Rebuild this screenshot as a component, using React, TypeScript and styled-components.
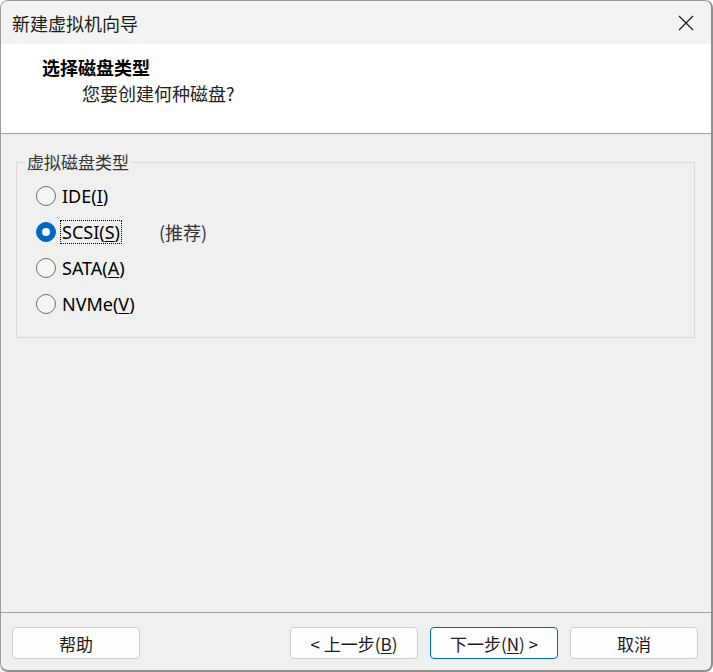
import React from "react";
import styled, { createGlobalStyle } from "styled-components";

const Global = createGlobalStyle`
  html, body { margin: 0; padding: 0; background: #ffffff; }
  * { box-sizing: border-box; }
`;

const FONT = `"Noto Sans", "Noto Sans CJK SC", sans-serif`;
const CJK = `"Noto Sans CJK SC", "Noto Sans", sans-serif`;

const Window = styled.div`
  width: 713px;
  height: 672px;
  display: flex;
  flex-direction: column;
  background: #f0f0f0;
  border: 1px solid #9c9c9c;
  border-right: 2px solid #8f8f8f;
  border-bottom: 2px solid #8f8f8f;
  border-radius: 8px;
  overflow: hidden;
  font-family: ${FONT};
  color: #000;
`;

const TitleBar = styled.div`
  height: 43px;
  flex: none;
  display: flex;
  align-items: center;
  justify-content: space-between;
  background: #f3f3f3;
  padding: 0 17px 0 11px;
`;

const TitleText = styled.span`
  font-family: ${CJK};
  font-size: 18px;
  color: #1a1a1a;
`;

const CloseButton = styled.div`
  width: 16px;
  height: 16px;
  display: flex;
`;

const Header = styled.div`
  height: 90px;
  flex: none;
  background: #ffffff;
  border-bottom: 1px solid #a0a0a0;
  padding: 12px 0 0 41px;
  display: flex;
  flex-direction: column;
  gap: 4px;
`;

const HeaderTitle = styled.div`
  font-family: ${CJK};
  font-size: 18px;
  font-weight: 700;
  line-height: 22px;
  color: #000;
`;

const HeaderSub = styled.div`
  font-family: ${CJK};
  font-size: 18px;
  line-height: 22px;
  padding-left: 40px;
  color: #222;
`;

const Body = styled.div`
  flex: 1;
  padding: 18px 16px 0 15px;
`;

const Group = styled.fieldset`
  margin: 0;
  padding: 6px 0 15px 0;
  border: 1px solid #dadada;
  display: flex;
  flex-direction: column;
`;

const Legend = styled.legend`
  margin-left: 8px;
  padding: 0 2px;
  font-family: ${CJK};
  font-size: 17px;
  line-height: 20px;
  color: #333;
`;

const Row = styled.label`
  height: 36px;
  margin-left: 19px;
  display: flex;
  align-items: center;
`;

const Circle = styled.span<{ $checked?: boolean }>`
  width: 20px;
  height: 20px;
  border-radius: 50%;
  flex: none;
  display: flex;
  align-items: center;
  justify-content: center;
  background: ${(p) => (p.$checked ? "#0067c0" : "#f5f5f5")};
  border: 1px solid ${(p) => (p.$checked ? "#0067c0" : "#6e6e6e")};
  &::after {
    content: "";
    display: ${(p) => (p.$checked ? "block" : "none")};
    width: 8px;
    height: 8px;
    border-radius: 50%;
    background: #ffffff;
  }
`;

const RadioLabel = styled.span<{ $focused?: boolean }>`
  margin-left: 5px;
  padding: 0 1px;
  font-size: 18px;
  line-height: 22px;
  color: #000;
  outline: ${(p) => (p.$focused ? "1px dotted #000" : "none")};
  outline-offset: 0;
  u { text-underline-offset: 2px; }
`;

const Note = styled.span`
  margin-left: 38px;
  font-family: ${CJK};
  font-size: 18px;
  color: #333;
`;

const Footer = styled.div`
  flex: none;
  border-top: 1px solid #a0a0a0;
  padding: 14px 13px 11px 11px;
  display: flex;
  align-items: center;
`;

const Spacer = styled.div`
  flex: 1;
`;

const ButtonGroup = styled.div`
  display: flex;
  gap: 12px;
`;

const Button = styled.button<{ $primary?: boolean }>`
  width: 128px;
  height: 32px;
  border-radius: 4px;
  background: #fdfdfd;
  border: 1px solid ${(p) => (p.$primary ? "#0067c0" : "#d0d0d0")};
  font-family: ${CJK};
  font-size: 17px;
  color: #1a1a1a;
  padding: 0;
  display: flex;
  align-items: center;
  justify-content: center;
  u { text-underline-offset: 2px; }
`;

const options = [
  { key: "ide", pre: "IDE(", acc: "I", post: ")" },
  { key: "scsi", pre: "SCSI(", acc: "S", post: ")", checked: true, note: "(推荐)" },
  { key: "sata", pre: "SATA(", acc: "A", post: ")" },
  { key: "nvme", pre: "NVMe(", acc: "V", post: ")" },
];

export default function App() {
  return (
    <>
      <Global />
      <Window>
        <TitleBar>
          <TitleText>新建虚拟机向导</TitleText>
          <CloseButton>
            <svg width="16" height="16" viewBox="0 0 16 16">
              <path d="M1 1 L15 15 M15 1 L1 15" stroke="#1a1a1a" strokeWidth="1.2" fill="none" />
            </svg>
          </CloseButton>
        </TitleBar>
        <Header>
          <HeaderTitle>选择磁盘类型</HeaderTitle>
          <HeaderSub>您要创建何种磁盘?</HeaderSub>
        </Header>
        <Body>
          <Group>
            <Legend>虚拟磁盘类型</Legend>
            {options.map((o) => (
              <Row key={o.key}>
                <Circle $checked={o.checked} />
                <RadioLabel $focused={o.checked}>
                  {o.pre}
                  <u>{o.acc}</u>
                  {o.post}
                </RadioLabel>
                {o.note && <Note>{o.note}</Note>}
              </Row>
            ))}
          </Group>
        </Body>
        <Footer>
          <Button>帮助</Button>
          <Spacer />
          <ButtonGroup>
            <Button>
              &lt; 上一步(<u>B</u>)
            </Button>
            <Button $primary>
              下一步(<u>N</u>) &gt;
            </Button>
            <Button>取消</Button>
          </ButtonGroup>
        </Footer>
      </Window>
    </>
  );
}
